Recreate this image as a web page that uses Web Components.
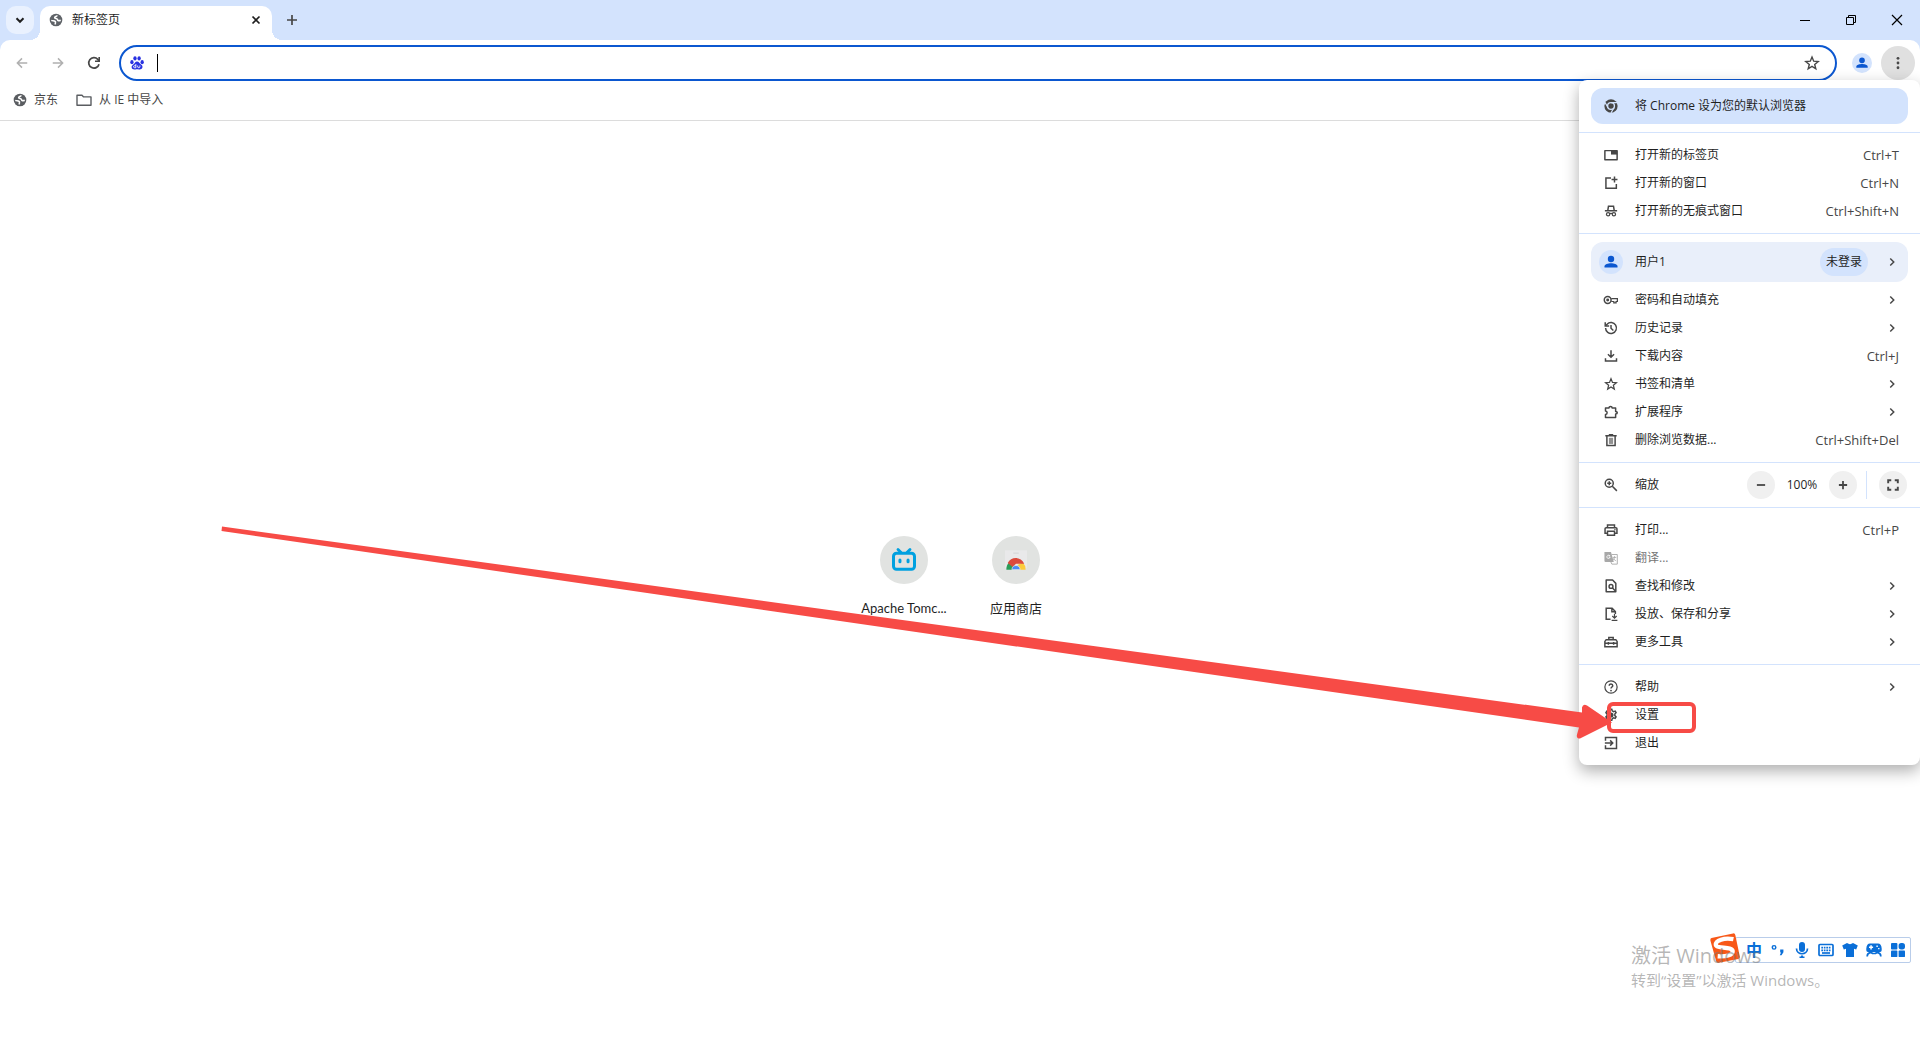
<!DOCTYPE html>
<html lang="zh-CN">
<head>
<meta charset="utf-8">
<title>新标签页</title>
<style>
  html, body { height: 100%; }
  body {
    margin: 0;
    overflow: hidden;
    background: #fff;
    color: #1f1f1f;
    font: 12px/20px "Open Sans", "Noto Sans CJK SC", sans-serif;
  }
</style>
</head>
<body>
<browser-window>
  <tab-strip slot="tabs">新标签页</tab-strip>
  <browser-toolbar slot="toolbar"></browser-toolbar>
  <bookmarks-bar slot="bookmarks">
    <bookmark-item icon="globe" size="14">京东</bookmark-item>
    <bookmark-item icon="folder" size="16">从 IE 中导入</bookmark-item>
  </bookmarks-bar>
  <new-tab-page>
    <site-shortcut icon="bili" size="24">Apache Tomc...</site-shortcut>
    <site-shortcut icon="store" size="22">应用商店</site-shortcut>
  </new-tab-page>
  <app-menu slot="overlay">
    <menu-banner icon="chrome">将 Chrome 设为您的默认浏览器</menu-banner>
    <menu-group>
      <menu-row icon="tab" keys="Ctrl+T">打开新的标签页</menu-row>
      <menu-row icon="window" keys="Ctrl+N">打开新的窗口</menu-row>
      <menu-row icon="incognito" keys="Ctrl+Shift+N">打开新的无痕式窗口</menu-row>
    </menu-group>
    <menu-group>
      <menu-profile status="未登录">用户1</menu-profile>
      <menu-row icon="key" submenu>密码和自动填充</menu-row>
      <menu-row icon="history" submenu>历史记录</menu-row>
      <menu-row icon="download" keys="Ctrl+J">下载内容</menu-row>
      <menu-row icon="star" submenu>书签和清单</menu-row>
      <menu-row icon="extension" submenu>扩展程序</menu-row>
      <menu-row icon="trash" keys="Ctrl+Shift+Del">删除浏览数据...</menu-row>
    </menu-group>
    <menu-group>
      <menu-zoom level="100%">缩放</menu-zoom>
    </menu-group>
    <menu-group>
      <menu-row icon="print" keys="Ctrl+P">打印...</menu-row>
      <menu-row icon="translate" disabled>翻译...</menu-row>
      <menu-row icon="find" submenu>查找和修改</menu-row>
      <menu-row icon="cast" submenu>投放、保存和分享</menu-row>
      <menu-row icon="tools" submenu>更多工具</menu-row>
    </menu-group>
    <menu-group>
      <menu-row icon="help" submenu>帮助</menu-row>
      <menu-row icon="gear">设置</menu-row>
      <menu-row icon="exit">退出</menu-row>
    </menu-group>
  </app-menu>
  <pointer-arrow slot="overlay"></pointer-arrow>
  <ime-bar slot="overlay"></ime-bar>
  <activation-note slot="overlay">
    激活 Windows
    <span slot="hint">转到“设置”以激活 Windows。</span>
  </activation-note>
</browser-window>

<script>
// all icons sit on a 16 unit grid
const line = 'fill="none" stroke="currentColor" stroke-width="1.7"';
const thin = 'fill="none" stroke="currentColor" stroke-width="1.4"';
const ICONS = {
  chevronDown: `<path d="M4.5 6.3 8 9.8l3.5-3.5" fill="none" stroke="currentColor" stroke-width="2"/>`,
  chevronRight: `<path d="M6 4 10 8l-4 4" ${line}/>`,
  close: `<path d="m4.5 4.5 7 7m0-7-7 7" ${line}/>`,
  plus: `<path d="M8 3v10M3 8h10" ${line}/>`,
  boldPlus: `<path d="M8 2.5v11M2.5 8h11" fill="none" stroke="currentColor" stroke-width="2.4"/>`,
  minus: `<path d="M2.5 8h11" fill="none" stroke="currentColor" stroke-width="2.4"/>`,
  winMin: `<path d="M3 8.5h10" fill="none" stroke="currentColor"/>`,
  winRestore: `<path d="M3.5 5.5h7v7h-7zM5.5 5.5v-2h7v7h-2" fill="none" stroke="currentColor"/>`,
  winClose: `<path d="m3 3 10 10M13 3 3 13" fill="none" stroke="currentColor" stroke-width="1.2"/>`,
  back: `<path d="M14 8H3m5-5.3L2.7 8 8 13.3" ${line}/>`,
  forward: `<path d="M2 8h11M8 2.7 13.3 8 8 13.3" ${line}/>`,
  reload: `<path d="M13 9.2A5.2 5.2 0 1 1 11.8 4.4l1.3 1.5" ${line}/><path d="M14 1.9v5H9V5.4h3.4V1.9z"/>`,
  globe: `<circle cx="8" cy="8" r="7.2"/><path d="M9.3 2.6c-.3 1.6-2.8 1-2.8 2.5 0 1.8 3 .8 3.3 2.7.2 1.3 1.7.9 3.7.6M2.6 8.5c1.3.8 3.5-.2 4.6 1.2.8 1.1-.6 1.5.2 3.5" fill="none" stroke="#fff" stroke-width="1.8"/>`,
  folder: `<path d="M1 3.2h5l1.6 1.7H15v8.3H1z" ${thin} stroke-linejoin="round"/>`,
  baidu: `<g fill="#2932e1"><ellipse cx="2.2" cy="7" rx="1.9" ry="2.4"/><ellipse cx="5.7" cy="2.7" rx="1.9" ry="2.5"/><ellipse cx="10.4" cy="2.7" rx="1.9" ry="2.5"/><ellipse cx="13.9" cy="7" rx="1.9" ry="2.3"/><path d="M8 6.2c2.2 0 2.9 2.2 4.3 3.3 1.6 1.2 2.4 2.4 1.8 4-.6 1.9-2.6 2-3.900 1.800-1.500-.2-2.700-.2-4.100 0-2 .3-3.900-.2-4.200-2.100-.3-1.600.7-2.700 2.200-3.700C5.600 8.500 5.800 6.200 8 6.200z"/></g><path d="M6.700 9.200v4.200H5.200c-1.500 0-1.500-2.300 0-2.300h1.500M8.800 10.900v1.800c0 .9 2.500.9 2.500 0v-1.800" fill="none" stroke="#fff"/>`,
  star: `<path d="m8 2 1.700 4.200 4.500.3-3.500 2.900 1.100 4.400L8 11.400l-3.800 2.400 1.100-4.400-3.500-2.900 4.500-.3z" ${thin}/>`,
  person: `<circle cx="8" cy="5" r="3.200"/><path d="M1.500 13.500v-1.200C1.500 10.200 5 9.200 8 9.200s6.500 1 6.500 3.100v1.200z"/>`,
  dots: `<circle cx="8" cy="2.600" r="1.600"/><circle cx="8" cy="8" r="1.600"/><circle cx="8" cy="13.400" r="1.600"/>`,
  chrome: `<circle cx="8" cy="8" r="7.600"/><circle cx="8" cy="8" r="3.900" fill="none" stroke="#d3e3fd" stroke-width="1.600"/><path d="M8 4.100h6.900M11.400 10l-3.500 6M4.600 10 1.200 4" fill="none" stroke="#d3e3fd" stroke-width="1.400"/>`,
  tab: `<path d="M1 3h14v10.500H1z" ${line} stroke-linejoin="round"/><path d="M8 3h7v4.500H8z"/>`,
  window: `<path d="M8 2.200H2.200v11.900h11.900V9" ${line}/><path d="M12 .6v6.800M8.600 4h6.800" ${line}/>`,
  incognito: `<path d="M1 7.800h14M4.300 7.500l.8-4.800h5.800l.8 4.800" ${line}/><circle cx="4.700" cy="11.700" r="1.900" ${thin}/><circle cx="11.300" cy="11.700" r="1.900" ${thin}/><path d="M6.500 11q1.500-.8 3 0" ${thin}/>`,
  key: `<circle cx="4.200" cy="8" r="3.900" ${line}/><circle cx="4.200" cy="8" r="1.700"/><path d="M8.300 6.300h7v3.400h-1.500v1.700h-2.600V9.700H8.300" ${thin}/>`,
  history: `<path d="M1.800 8A6.200 6.200 0 1 0 3.500 3.700L1.800 5.400" ${line}/><path d="M1.400 1.300v4.500h4.500M8 4.500v3.800l2.700 2.500" ${line}/>`,
  download: `<path d="M8 1.300v8M4.500 6 8 9.500 11.500 6M1.700 10.500v3.300h12.600v-3.300" ${line}/>`,
  extension: `<path d="M1.700 3.500h4c0-2.500 3.600-2.500 3.600 0h4v4c2.500 0 2.500 2.800 0 2.800v4H1.700v-3.400c2.500-.3 2.500-3.800 0-4.100z" ${line} stroke-linejoin="round"/>`,
  trash: `<path d="M3.300 4v10.300h9.400V4M1.500 3.200h13M5.500 1.900h5" ${line}/><path d="M5.600 5.500h4.800v7H5.600z" opacity=".6"/>`,
  zoom: `<circle cx="6" cy="6" r="4.600" ${line}/><path d="m9.500 9.500 5.200 5.200M3.700 6h4.600M6 3.700v4.600" ${line}/>`,
  full: `<path d="M2.500 6V2.500H6M10 2.500h3.500V6M13.500 10v3.500H10M6 13.500H2.500V10" fill="none" stroke="currentColor" stroke-width="2.200"/>`,
  print: `<path d="M4 5V2.200h8V5M4 11.700H1.200V6.600q0-1.300 1.300-1.300h11q1.300 0 1.300 1.300v5.100H12M4 9.500h8v4.600H4z" ${line}/><circle cx="12.500" cy="7.500" r=".8"/>`,
  translate: `<path d="M.5 1h7.500l3.200 11.500H1.700Q.5 12.500.5 11z"/><path d="M8.700 4h6.500v11H9l-1.200-2.500M10 7.300h4M12 6v1.300c-.2 1.800-1.400 3.100-2.600 3.900M10.500 8.500l3 3" fill="none" stroke="currentColor"/><path d="M7 5.500c-2-1.700-4 0-3.700 1.600.3 2 3.400 1.900 3.700-.2H5.300" fill="none" stroke="#fff"/>`,
  find: `<path d="M9.800 1.200H2.500v13.400h11V5z" ${line} stroke-linejoin="round"/><circle cx="8" cy="8.500" r="2.200" ${line}/><path d="m9.500 10 3.500 3.700" ${line}/>`,
  cast: `<path d="M7.500 14H2.500V1.300h6.800l3.700 3.800V8M9 1.500v4h4" ${line}/><path d="M12 8v4.500M9.500 10.300l2.500 2.400 2.500-2.400M8.700 15.200h6.600" ${thin}/>`,
  tools: `<path d="M1 13.500V7.300l1.500-2h11l1.500 2v6.200zM5.500 5.300V2.800h5v2.500M1 9.500h14M5 8v3M11 8v3" ${line}/>`,
  help: `<circle cx="8" cy="8" r="7" ${thin}/><path d="M6 6.500c0-2.700 4-2.600 4 0C10 8 8 8 8 9.700" ${line}/><circle cx="8" cy="12" r="1"/>`,
  gear: `<path d="m6.800 2.400.3-1h1.800l.5 1.900 1.500.9 1.900-.6 1 1.800-1.400 1.400v1.900l1.400 1.400-1 1.800-1.900-.6-1.500.9-.5 1.900H7.100l-.5-1.900-1.500-.9-1.900.6-1-1.800 1.400-1.400V7.200L2.200 5.400l1-1.800 1.900.6 1.500-.9z" ${line}/><circle cx="8" cy="8" r="2.900"/>`,
  exit: `<path d="M1.700 5.500V1.800h12.600v12.400H1.700v-3.700M1 8h9M7 5l3 3-3 3" ${line}/>`,
  bili: `<g fill="none" stroke="#00a1e0" stroke-linecap="round"><rect x="1" y="3.500" width="14" height="10.700" rx="2" stroke-width="2"/><path d="m4 1 2 2m6-2-2 2" stroke-width="1.900"/><path d="M5.300 8v1.100M10.700 8v1.100" stroke-width="2"/></g>`,
  store: `<path d="M0 1h16v13H0z" fill="#e9e9ea"/><path d="M6 3h4" stroke="#d5d6d8" stroke-width=".8"/><path d="M1 15a7 7 0 0 1 2.200-5.500L7 12l-1 3z" fill="#2a9d58"/><path d="M15 15a7 7 0 0 0-2-5.200L9 11.700l1 3.300z" fill="#fccb3c"/><path d="M2 10.200C4.500 5.200 11.500 5.400 14 10.700H8L5.500 13z" fill="#dc4a3d"/><path d="M5 15c0-4 6-4 6 0z" fill="#4a8af4" stroke="#eee" stroke-width=".5"/>`,
  sogou: `<path d="m.8 2.700 11.500-2.500q1-.2 1.200.8l2.400 11.500q.2 1-.8 1.300l-10.400 2.100q-1 .2-1.400-.8L.2 4Q0 2.900.8 2.700z" fill="#f85818"/><path d="M12.500 3.300C7.500 2.300 2.900 4 3.100 6.300c.2 2.200 8.800.7 9 3.400.1 2.300-3.800 3-8 2.700" fill="none" stroke="#fff" stroke-width="2.300"/>`,
  punct: `<circle cx="3.500" cy="5" r="2" ${line}/><path d="M10.500 7.500h3.700v3L12 14h-2l1.500-3.200h-1z"/>`,
  mic: `<rect x="5" y="0" width="6" height="10" rx="3"/><path d="M2.500 6.500c0 7 11 7 11 0" ${line}/><path d="M7 13.500h2v1H7zM5.500 14.500h5V16h-5z"/>`,
  keyboard: `<rect x="1" y="2.500" width="14" height="11" rx="1" ${line}/><path d="M3.300 5.700h9.400M3.300 8.300h9.400" ${line} stroke-dasharray="1.700 .8"/><path d="M4 11h8" ${line}/>`,
  shirt: `<path d="M5 1q3 2.300 6 0l4.800 2.500-1.600 4-2.200-.8V15H4V6.700l-2.200.8-1.600-4z"/>`,
  game: `<path fill-rule="evenodd" d="M4 1.500h8q3.300 0 3.700 5 .3 3.500-1.700 3.500H2Q0 10 .3 6.500q.4-5 3.700-5zM4.300 3.300v1.300H3v1.500h1.300v1.300h1.500V6.100h1.300V4.600H5.800V3.300zm6.100.3v1.400h1.400V3.600zm1.700 2.300v1.400h1.400V5.900z"/><path d="M1.200 14.500c0-4.200 4.300-4.500 5.300-3h3c1-1.500 5.300-1.200 5.300 3" ${line}/>`,
  grid: `<rect x="0" y="0" width="7.300" height="7.300" rx="1"/><rect x="8.700" y="0" width="7.300" height="7.300" rx="3"/><rect x="0" y="8.700" width="7.300" height="7.300" rx="1"/><rect x="8.700" y="8.700" width="7.300" height="7.300" rx="1"/>`
};

class BaseElement extends HTMLElement {
  constructor() {
    super();
    this.attachShadow({ mode: 'open' });
  }
  connectedCallback() {
    this.shadowRoot.innerHTML = `
      <style>
        :host { display: block; }
        * { box-sizing: border-box; }
        button, a, input { margin: 0; padding: 0; border: 0; background: none; color: inherit; font: inherit; text-decoration: none; }
        ${this.styles()}
      </style>
      ${this.markup()}`;
  }
  styles() { return ''; }
  markup() { return '<slot></slot>'; }
}

class UiIcon extends BaseElement {
  styles() {
    const size = this.getAttribute('size') || 16;
    return `
      :host { flex: none; width: ${size}px; height: ${size}px; }
      svg { display: block; width: 100%; height: 100%; fill: currentColor; overflow: visible; }`;
  }
  markup() {
    return `<svg viewBox="0 0 16 16" aria-hidden="true">${ICONS[this.getAttribute('name')]}</svg>`;
  }
}

class BrowserWindow extends BaseElement {
  styles() {
    return `
      :host { position: relative; display: flex; flex-direction: column; height: 100%; }
      main { flex: 1; display: flex; }
      main ::slotted(*) { flex: 1; }`;
  }
  markup() {
    return `
      <slot name="tabs"></slot>
      <slot name="toolbar"></slot>
      <slot name="bookmarks"></slot>
      <main><slot></slot></main>
      <slot name="overlay"></slot>`;
  }
}

class TabStrip extends BaseElement {
  styles() {
    return `
      :host { display: flex; align-items: flex-end; height: 40px; padding-left: 6px; background: #d3e3fd; }
      button { display: flex; align-items: center; justify-content: center; }
      .search { width: 28px; height: 28px; margin-bottom: 6px; border-radius: 10px; background: #e9f1fe; }
      .tab {
        position: relative; display: flex; align-items: center; gap: 9px;
        width: 232px; height: 34px; margin-left: 6px; padding: 0 8px 6px 9px;
        border-radius: 10px 10px 0 0; background: #fff;
      }
      .tab::before, .tab::after { content: ""; position: absolute; bottom: 0; width: 10px; height: 10px; }
      .tab::before { right: 100%; background: radial-gradient(circle at 0 0, transparent 10px, #fff 10px); }
      .tab::after { left: 100%; background: radial-gradient(circle at 100% 0, transparent 10px, #fff 10px); }
      .tab ui-icon { color: #5f6368; }
      .title { flex: 1; }
      .tab button ui-icon { color: #1f1f1f; }
      .new { width: 28px; height: 28px; margin: 0 auto 6px 6px; color: #474747; }
      .controls { display: flex; align-self: flex-start; color: #000; }
      .controls button { width: 46px; height: 40px; }`;
  }
  markup() {
    return `
      <button class="search" aria-label="搜索标签页"><ui-icon name="chevronDown"></ui-icon></button>
      <div class="tab">
        <ui-icon name="globe" size="14"></ui-icon>
        <span class="title"><slot></slot></span>
        <button aria-label="关闭"><ui-icon name="close"></ui-icon></button>
      </div>
      <button class="new" aria-label="新标签页"><ui-icon name="plus"></ui-icon></button>
      <div class="controls">
        <button aria-label="最小化"><ui-icon name="winMin"></ui-icon></button>
        <button aria-label="还原"><ui-icon name="winRestore"></ui-icon></button>
        <button aria-label="关闭窗口"><ui-icon name="winClose"></ui-icon></button>
      </div>`;
  }
}

class BrowserToolbar extends BaseElement {
  styles() {
    return `
      :host { background: #d3e3fd; color: #474747; }
      .bar { display: flex; align-items: center; height: 46px; padding: 0 5px 0 4px; border-radius: 10px 10px 0 0; background: #fff; }
      button { display: flex; align-items: center; justify-content: center; }
      .nav { width: 36px; height: 36px; }
      .nav:disabled { color: #b0b0b0; }
      .address {
        flex: 1; display: flex; align-items: center; height: 36px; margin: 0 15px 0 7px; padding: 0 15px 0 9px;
        border: 2px solid #0b57d0; border-radius: 18px;
      }
      .caret { width: 1px; height: 18px; margin-left: 13px; background: #000; }
      input { flex: 1; min-width: 0; outline: none; }
      .avatar { width: 20px; height: 20px; margin-right: 9px; border-radius: 50%; background: #d3e3fd; color: #0b57d0; }
      .more { width: 34px; height: 34px; border-radius: 50%; background: #e0e0e0; }`;
  }
  markup() {
    return `
      <div class="bar">
        <button class="nav" aria-label="后退" disabled><ui-icon name="back" size="14"></ui-icon></button>
        <button class="nav" aria-label="前进" disabled><ui-icon name="forward" size="14"></ui-icon></button>
        <button class="nav" aria-label="重新加载"><ui-icon name="reload"></ui-icon></button>
        <div class="address">
          <ui-icon name="baidu" size="14"></ui-icon>
          <span class="caret"></span>
          <input type="text" aria-label="地址和搜索栏">
          <button aria-label="为此标签页添加书签"><ui-icon name="star"></ui-icon></button>
        </div>
        <button class="avatar" aria-label="用户1"><ui-icon name="person" size="14"></ui-icon></button>
        <button class="more" aria-label="更多"><ui-icon name="dots" size="14"></ui-icon></button>
      </div>`;
  }
}

class BookmarksBar extends BaseElement {
  styles() {
    return `:host { display: flex; gap: 18px; height: 35px; padding: 0 13px 6px; box-sizing: border-box; border-bottom: 1px solid #dcdcdc; }`;
  }
}

class BookmarkItem extends BaseElement {
  styles() {
    return `
      a { display: flex; align-items: center; gap: 7px; height: 28px; color: #474747; }
      ui-icon { color: #5a5d61; }`;
  }
  markup() {
    return `<a href="#"><ui-icon name="${this.getAttribute('icon')}" size="${this.getAttribute('size')}"></ui-icon><slot></slot></a>`;
  }
}

class NewTabPage extends BaseElement {
  styles() {
    return `:host { display: flex; align-items: center; justify-content: center; }`;
  }
}

class SiteShortcut extends BaseElement {
  styles() {
    return `
      :host { width: 112px; }
      a { display: flex; flex-direction: column; align-items: center; gap: 14px; padding-bottom: 8px; }
      .disc { display: flex; align-items: center; justify-content: center; width: 48px; height: 48px; border-radius: 50%; background: #e1e3e1; }
      .label { font-family: Lato, "Noto Sans CJK SC", sans-serif; font-size: 13px; white-space: nowrap; }`;
  }
  markup() {
    return `
      <a href="#">
        <span class="disc"><ui-icon name="${this.getAttribute('icon')}" size="${this.getAttribute('size')}"></ui-icon></span>
        <span class="label"><slot></slot></span>
      </a>`;
  }
}

class AppMenu extends BaseElement {
  styles() {
    return `
      :host {
        position: absolute; top: 80px; right: 0; width: 341px; padding-top: 8px; box-sizing: border-box;
        border-radius: 8px; background: #fff; box-shadow: 0 6px 16px rgba(0, 0, 0, .32);
      }`;
  }
}

class MenuGroup extends BaseElement {
  styles() {
    return `:host { padding: 8px 0; border-top: 1px solid #d3e3fd; }`;
  }
}

class MenuBanner extends BaseElement {
  styles() {
    return `
      button {
        display: flex; align-items: center; gap: 17px; width: calc(100% - 24px); height: 36px;
        margin: 0 12px 8px; padding: 0 13px; border-radius: 12px; background: #d3e3fd;
      }
      ui-icon { color: #474747; }`;
  }
  markup() {
    return `<button><ui-icon name="${this.getAttribute('icon')}" size="14"></ui-icon><slot></slot></button>`;
  }
}

class MenuRow extends BaseElement {
  styles() {
    return `
      button { display: flex; align-items: center; gap: 17px; width: 100%; height: 28px; padding: 0 21px 0 25px; text-align: left; }
      button:disabled { color: #757575; }
      ui-icon { color: #474747; }
      button:disabled ui-icon { color: #a8a8a8; }
      .label { flex: 1; }
      .keys { color: #474747; font-size: 13px; }`;
  }
  markup() {
    const keys = this.getAttribute('keys');
    return `
      <button ${this.hasAttribute('disabled') ? 'disabled' : ''}>
        <ui-icon name="${this.getAttribute('icon')}" size="14"></ui-icon>
        <span class="label"><slot></slot></span>
        ${keys ? `<span class="keys">${keys}</span>` : ''}
        ${this.hasAttribute('submenu') ? '<ui-icon name="chevronRight" size="14"></ui-icon>' : ''}
      </button>`;
  }
}

class MenuProfile extends BaseElement {
  styles() {
    return `
      button {
        display: flex; align-items: center; gap: 12px; width: calc(100% - 24px); height: 40px;
        margin: 0 12px 4px; padding: 0 9px 0 8px; border-radius: 12px; background: #e9effa; text-align: left;
      }
      .avatar { display: flex; align-items: center; justify-content: center; width: 24px; height: 24px; border-radius: 50%; background: #d3e3fd; color: #0b57d0; }
      .name { flex: 1; }
      .status { width: 48px; margin-right: 5px; border-radius: 14px; background: #d3e3fd; line-height: 28px; text-align: center; }
      .arrow { color: #474747; }`;
  }
  markup() {
    return `
      <button>
        <span class="avatar"><ui-icon name="person"></ui-icon></span>
        <span class="name"><slot></slot></span>
        <span class="status">${this.getAttribute('status')}</span>
        <ui-icon class="arrow" name="chevronRight" size="14"></ui-icon>
      </button>`;
  }
}

class MenuZoom extends BaseElement {
  styles() {
    return `
      :host { display: flex; align-items: center; height: 28px; padding: 0 13px 0 25px; }
      ui-icon { color: #474747; }
      .label { flex: 1; margin-left: 17px; }
      button { display: flex; align-items: center; justify-content: center; width: 28px; height: 28px; border-radius: 50%; background: #f0f0f0; }
      .level { width: 54px; text-align: center; }
      .rule { width: 1px; height: 28px; margin: 0 12px 0 9px; background: #d3e3fd; }`;
  }
  markup() {
    return `
      <ui-icon name="zoom" size="14"></ui-icon>
      <span class="label"><slot></slot></span>
      <button aria-label="缩小"><ui-icon name="minus" size="12"></ui-icon></button>
      <span class="level">${this.getAttribute('level')}</span>
      <button aria-label="放大"><ui-icon name="boldPlus" size="12"></ui-icon></button>
      <span class="rule"></span>
      <button aria-label="全屏"><ui-icon name="full" size="14"></ui-icon></button>`;
  }
}

// red arrow that points at the settings row
class PointerArrow extends BaseElement {
  styles() {
    return `
      :host { position: absolute; inset: 0; pointer-events: none; }
      svg { display: block; width: 100%; height: 100%; }`;
  }
  markup() {
    return `
      <svg viewBox="0 0 1920 1040" preserveAspectRatio="xMaxYMin meet" aria-hidden="true">
        <path d="m222 526.500 618 85 742 101v-5q1-4 5-2l25 17-32 16q-4 0-3-4l2-7-739-106.500L221.500 531z" fill="#f74b46"/>
        <rect x="1609" y="704" width="85" height="27" rx="4" fill="none" stroke="#f74b46" stroke-width="4"/>
      </svg>`;
  }
}

class ImeBar extends BaseElement {
  styles() {
    return `
      :host { position: absolute; right: 9px; bottom: 77px; display: flex; align-items: flex-end; isolation: isolate; color: #0a6fd8; }
      .logo { margin-right: -5px; z-index: 1; }
      .bar { display: flex; height: 26px; padding-left: 6px; border: 1px solid #b9cdea; border-radius: 2px; background: #fff; }
      button { display: flex; align-items: center; justify-content: center; width: 24px; height: 24px; }
      .mode { font-size: 16px; font-weight: 700; }`;
  }
  markup() {
    const tools = { punct: '标点', mic: '语音', keyboard: '软键盘', shirt: '皮肤', game: '游戏', grid: '工具箱' };
    return `
      <ui-icon class="logo" name="sogou" size="30"></ui-icon>
      <div class="bar">
        <button class="mode">中</button>
        ${Object.keys(tools).map(name => `<button aria-label="${tools[name]}"><ui-icon name="${name}" size="${name === 'punct' || name === 'grid' ? 14 : 16}"></ui-icon></button>`).join('')}
      </div>`;
  }
}

class ActivationNote extends BaseElement {
  styles() {
    return `
      :host { position: absolute; right: 0; bottom: 48px; width: 289px; color: rgba(120, 120, 120, .55); pointer-events: none; }
      div { font-size: 20px; line-height: 24px; }
      .hint { font-size: 15px; }`;
  }
  markup() {
    return `
      <div><slot></slot></div>
      <div class="hint"><slot name="hint"></slot></div>`;
  }
}

customElements.define('ui-icon', UiIcon);
customElements.define('browser-window', BrowserWindow);
customElements.define('tab-strip', TabStrip);
customElements.define('browser-toolbar', BrowserToolbar);
customElements.define('bookmarks-bar', BookmarksBar);
customElements.define('bookmark-item', BookmarkItem);
customElements.define('new-tab-page', NewTabPage);
customElements.define('site-shortcut', SiteShortcut);
customElements.define('app-menu', AppMenu);
customElements.define('menu-group', MenuGroup);
customElements.define('menu-banner', MenuBanner);
customElements.define('menu-row', MenuRow);
customElements.define('menu-profile', MenuProfile);
customElements.define('menu-zoom', MenuZoom);
customElements.define('pointer-arrow', PointerArrow);
customElements.define('ime-bar', ImeBar);
customElements.define('activation-note', ActivationNote);
</script>
</body>
</html>
